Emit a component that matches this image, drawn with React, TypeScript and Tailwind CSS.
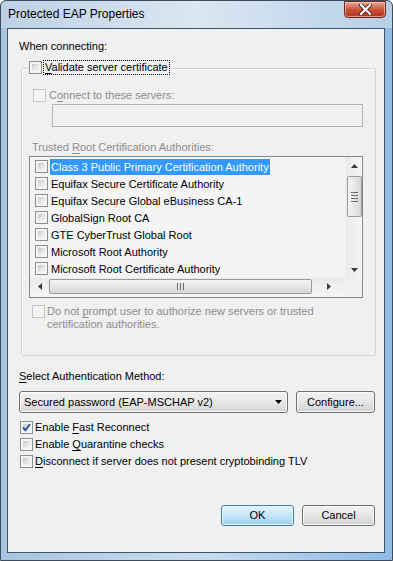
import React from "react";

const F = { fontFamily: '"Liberation Sans", Arial, sans-serif' };

function Box({ checked, disabled }: { checked?: boolean; disabled?: boolean }) {
  return (
    <span
      className={
        disabled
          ? "relative flex w-[13px] h-[13px] shrink-0 border border-[#c4c4c4] bg-[#f6f6f6] p-[2px]"
          : "relative flex w-[13px] h-[13px] shrink-0 border border-[#8e8f8f] bg-[#f4f4f4] p-[2px]"
      }
    >
      <span
        className={
          disabled
            ? "flex-1 bg-[#f4f4f4]"
            : "flex-1 bg-gradient-to-br from-[#c3c6cb] via-[#e3e4e6] to-[#f7f7f7]"
        }
      />
      {checked && (
        <svg className="absolute left-[1px] top-[1px]" width="9" height="9" viewBox="0 0 9 9">
          <path d="M1 4.5 L3.4 7.2 L8 1" fill="none" stroke="#2b4f9c" strokeWidth="1.9" />
        </svg>
      )}
    </span>
  );
}

function Btn({ children, def, w }: { children: React.ReactNode; def?: boolean; w: string }) {
  return (
    <div
      className={
        def
          ? `${w} h-[21px] flex items-center justify-center rounded-[3px] border border-[#3c7fb1] bg-gradient-to-b from-[#e5f4fc] via-[#c4e5f6] to-[#98d1ef] shadow-[inset_0_0_0_1px_#e6f6fe] text-[11px] text-black`
          : `${w} h-[21px] flex items-center justify-center rounded-[3px] border border-[#707070] bg-gradient-to-b from-[#f2f2f2] via-[#e6e6e6] to-[#d2d2d2] shadow-[inset_0_0_0_1px_#fbfbfb] text-[11px] text-black`
      }
    >
      {children}
    </div>
  );
}

const certs = [
  "Class 3 Public Primary Certification Authority",
  "Equifax Secure Certificate Authority",
  "Equifax Secure Global eBusiness CA-1",
  "GlobalSign Root CA",
  "GTE CyberTrust Global Root",
  "Microsoft Root Authority",
  "Microsoft Root Certificate Authority",
];

export default function App() {
  return (
    <div
      style={F}
      className="w-[393px] h-[561px] flex flex-col pl-[6px] pr-[7px] pb-[7px] bg-gradient-to-r from-[#a9c4df] via-[#c9dcee] to-[#8fbbe6] border border-[#3d4d5c] rounded-t-[6px] text-[11px] text-black overflow-hidden"
    >
      {/* title bar */}
      <div className="h-[27px] flex items-start justify-between -ml-[6px] -mr-[7px] bg-gradient-to-r from-[#bcd1e6] via-[#dbe7f2] to-[#b6cfe8] rounded-t-[6px]">
        <div className="pl-[7px] pt-[6px] text-[12px] leading-[15px] text-black">Protected EAP Properties</div>
        <div className="mr-[6px] mt-[0px] w-[42px] h-[17px] rounded-b-[4px] border border-[#6b2a20] bg-gradient-to-b from-[#e8a99a] via-[#c9533a] to-[#b3301a] shadow-[inset_0_0_0_1px_rgba(255,210,200,0.6)] flex items-center justify-center">
          <svg width="13" height="11" viewBox="0 0 13 11">
            <path d="M2 1 L11 10 M11 1 L2 10" stroke="#5a2218" strokeWidth="4" strokeLinecap="round" />
            <path d="M2 1 L11 10 M11 1 L2 10" stroke="#ffffff" strokeWidth="2.2" strokeLinecap="round" />
          </svg>
        </div>
      </div>

      {/* client */}
      <div className="flex-1 flex flex-col border border-[#3f5568] bg-[#f0f0f0]">
        <div className="mt-[10px] ml-[11px] leading-[14px]">When connecting:</div>

        {/* group box */}
        <div className="mt-[15px] ml-[13px] w-[355px] h-[288px] border border-[#d5d5d5] shadow-[inset_1px_1px_0_#ffffff] rounded-[2px] flex flex-col">
          <div className="self-start -mt-[9px] ml-[6px] h-[15px] flex items-center gap-[1px] bg-[#f0f0f0] pl-[1px] pr-[2px]">
            <Box />
            <span className="h-[15px] px-[1px] leading-[13px] border border-dotted border-[#000]">
              <span className="underline decoration-1 underline-offset-[2px]">V</span>alidate server certificate
            </span>
          </div>

          <div className="mt-[13px] ml-[11px] h-[14px] flex items-center gap-[3px] text-[#8d8d8d]">
            <Box disabled />
            <span className="leading-[14px]">
              C<span className="underline decoration-1 underline-offset-[2px]">o</span>nnect to these servers:
            </span>
          </div>

          <div className="mt-[2px] ml-[30px] w-[311px] h-[23px] border border-[#b4b4b4] bg-[#f0f0f0]" />

          <div className="mt-[13px] ml-[10px] leading-[14px] text-[#8d8d8d]">
            Trusted <span className="underline decoration-1 underline-offset-[2px]">R</span>oot Certification Authorities:
          </div>

          {/* list */}
          <div className="mt-[2px] ml-[7px] w-[334px] h-[142px] border border-[#828790] bg-[#f4f4f4] flex flex-col">
            <div className="flex h-[121px]">
              <div className="flex-1 pt-[1px] flex flex-col">
                {certs.map((c, i) => (
                  <div key={c} className="h-[17px] flex items-center pl-[5px]">
                    <Box />
                    <span
                      className={
                        i === 0
                          ? "ml-[2px] h-[16px] leading-[16px] px-[1px] bg-[#3399ff] text-white whitespace-nowrap"
                          : "ml-[2px] h-[16px] leading-[16px] px-[1px] whitespace-nowrap"
                      }
                    >
                      {c}
                    </span>
                  </div>
                ))}
              </div>
              {/* vertical scrollbar */}
              <div className="w-[17px] flex flex-col items-center bg-gradient-to-r from-[#e9e9e9] to-[#f6f6f6] border-l border-[#eeeeee]">
                <div className="h-[17px] flex items-center justify-center">
                  <svg width="7" height="4" viewBox="0 0 7 4"><path d="M0 4 L3.5 0 L7 4 Z" fill="#3a3a3a" /></svg>
                </div>
                <div className="mt-[2px] w-[15px] h-[41px] rounded-[2px] border border-[#9b9b9b] bg-gradient-to-r from-[#f4f4f4] via-[#e7e7e7] to-[#d6d6d6] flex flex-col items-center justify-center gap-[2px]">
                  <span className="w-[7px] h-[1px] bg-[#6b6b6b]" />
                  <span className="w-[7px] h-[1px] bg-[#6b6b6b]" />
                  <span className="w-[7px] h-[1px] bg-[#6b6b6b]" />
                  <span className="w-[7px] h-[1px] bg-[#6b6b6b]" />
                </div>
                <div className="flex-1" />
                <div className="h-[17px] flex items-center justify-center">
                  <svg width="7" height="4" viewBox="0 0 7 4"><path d="M0 0 L3.5 4 L7 0 Z" fill="#3a3a3a" /></svg>
                </div>
              </div>
            </div>
            {/* horizontal scrollbar */}
            <div className="flex h-[19px]">
              <div className="flex-1 h-[17px] flex items-center bg-gradient-to-b from-[#e9e9e9] to-[#f6f6f6]">
                <div className="w-[19px] flex items-center justify-center">
                  <svg width="4" height="7" viewBox="0 0 4 7"><path d="M4 0 L0 3.5 L4 7 Z" fill="#3a3a3a" /></svg>
                </div>
                <div className="w-[263px] h-[15px] rounded-[2px] border border-[#9b9b9b] bg-gradient-to-b from-[#f4f4f4] via-[#e7e7e7] to-[#d6d6d6] flex items-center justify-center gap-[2px]">
                  <span className="w-[1px] h-[7px] bg-[#6b6b6b]" />
                  <span className="w-[1px] h-[7px] bg-[#6b6b6b]" />
                  <span className="w-[1px] h-[7px] bg-[#6b6b6b]" />
                </div>
                <div className="flex-1 flex items-center justify-center">
                  <svg width="4" height="7" viewBox="0 0 4 7"><path d="M0 0 L4 3.5 L0 7 Z" fill="#3a3a3a" /></svg>
                </div>
              </div>
              <div className="w-[17px] h-[17px] bg-[#f0f0f0]" />
            </div>
          </div>

          <div className="mt-[7px] ml-[10px] flex items-start gap-[2px] text-[#8d8d8d]">
            <Box disabled />
            <span className="leading-[13px] whitespace-nowrap">
              Do not <span className="underline decoration-1 underline-offset-[2px]">p</span>rompt user to authorize new servers or trusted
              <br />
              certification authorities.
            </span>
          </div>
        </div>

        <div className="mt-[13px] ml-[11px] leading-[14px]">
          <span className="underline decoration-1 underline-offset-[2px]">S</span>elect Authentication Method:
        </div>

        <div className="mt-[8px] ml-[11px] flex gap-[8px]">
          <div className="w-[269px] h-[22px] rounded-[3px] border border-[#707070] bg-gradient-to-b from-[#f2f2f2] via-[#e8e8e8] to-[#d4d4d4] shadow-[inset_0_0_0_1px_#fbfbfb] flex items-center pl-[4px] pr-[5px]">
            <span className="flex-1 leading-[14px]">Secured password (EAP-MSCHAP v2)</span>
            <svg width="7" height="4" viewBox="0 0 7 4"><path d="M0 0 L3.5 4 L7 0 Z" fill="#000" /></svg>
          </div>
          <div className="h-[22px]">
            <div className="w-[79px] h-[22px] flex items-center justify-center rounded-[3px] border border-[#707070] bg-gradient-to-b from-[#f2f2f2] via-[#e6e6e6] to-[#d2d2d2] shadow-[inset_0_0_0_1px_#fbfbfb]">
              Configure...
            </div>
          </div>
        </div>

        <div className="mt-[6px] ml-[12px] flex flex-col">
          <div className="h-[17px] flex items-center gap-[2px]">
            <Box checked />
            <span>
              Enable <span className="underline decoration-1 underline-offset-[2px]">F</span>ast Reconnect
            </span>
          </div>
          <div className="h-[17px] flex items-center gap-[2px]">
            <Box />
            <span>
              Enable <span className="underline decoration-1 underline-offset-[2px]">Q</span>uarantine checks
            </span>
          </div>
          <div className="h-[17px] flex items-center gap-[2px]">
            <Box />
            <span>
              <span className="underline decoration-1 underline-offset-[2px]">D</span>isconnect if server does not present cryptobinding TLV
            </span>
          </div>
        </div>

        <div className="mt-[35px] ml-[213px] flex gap-[8px]">
          <Btn def w="w-[73px]">OK</Btn>
          <Btn w="w-[73px]">Cancel</Btn>
        </div>
      </div>
    </div>
  );
}
